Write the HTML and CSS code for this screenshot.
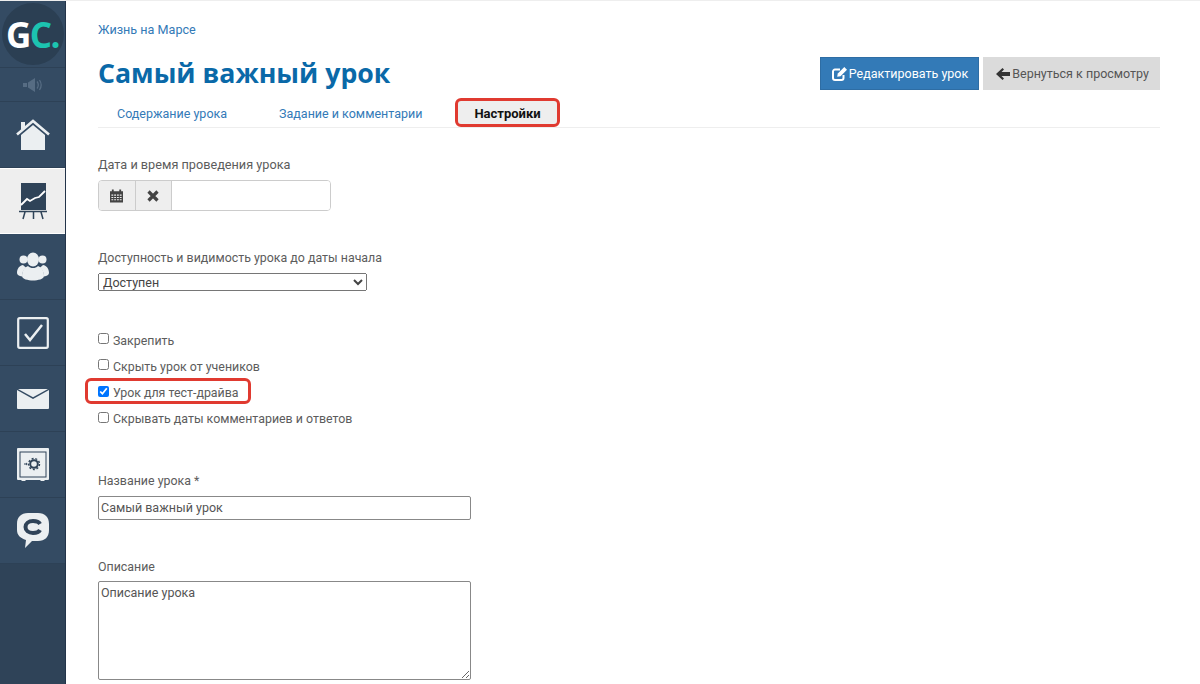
FILE: index.html
```html
<!DOCTYPE html>
<html lang="ru">
<head>
    <meta charset="UTF-8">
    <meta name="viewport" content="width=device-width, initial-scale=1.0">
    <title>Самый важный урок</title>
    <link rel="stylesheet" href="styles.css">
</head>
<body>
    <div class="page">
        <nav class="sidebar">
            <a class="side-logo">
                <span class="logo-circle"><span class="logo-g">G</span><span class="logo-c">C.</span></span>
            </a>
            <a class="side-sound">
                <svg width="22" height="16" viewBox="0 0 22 16"><path fill="#566c83" d="M1 6h4v4H1zM6 5.500 13 1v14L6 10.500z"/><path fill="none" stroke="#566c83" stroke-width="1.300" d="M15 4.500c1.500 2 1.500 5 0 7M17.500 3c2 3 2 7 0 10"/></svg>
            </a>
            <a class="side-item">
                <svg width="34" height="32" viewBox="0 0 34 32"><path fill="#ebeff1" d="M5 16 17 6l12 10v15H5z"/><path fill="none" stroke="#ebeff1" stroke-width="2.600" d="M1 15.500 17 2l16 13.500"/><path fill="#ebeff1" d="M5 3h4v5l-4 3z"/></svg>
            </a>
            <a class="side-item side-item-active">
                <svg width="28" height="38" viewBox="0 0 28 38"><path fill="#2f4358" d="M2 1h25v27H2z"/><path fill="none" stroke="#fff" stroke-width="1.800" d="M2 23l6-6 3 2 5-3 4-1 6-6"/><path fill="none" stroke="#2f4358" stroke-width="1.500" d="M0 29.500h28M6 30l-2 7M14.500 30v7M22 30l2 7"/></svg>
            </a>
            <a class="side-item">
                <svg width="34" height="29" viewBox="0 0 34 29"><path fill="#ebeff1" d="M7 13c-3 .5-6 3-6 8 0 2 2 3 5 3.500 0-4 1.500-7 4-9-1.200-.8-2.200-1.500-3-2.500zM27 13c3 .5 6 3 6 8 0 2-2 3-5 3.500 0-4-1.500-7-4-9 1.200-.8 2.200-1.500 3-2.500z"/><circle fill="#ebeff1" cx="7.500" cy="7.500" r="4"/><circle fill="#ebeff1" cx="26.500" cy="7.500" r="4"/><ellipse fill="#ebeff1" cx="17" cy="7.500" rx="6" ry="7"/><path fill="#ebeff1" d="M12 14c-4 1.500-6 5-6 10 0 3 6 4.500 11 4.500s11-1.500 11-4.500c0-5-2-8.500-6-10-1.500 1.500-3 2-5 2s-3.500-.5-5-2z"/></svg>
            </a>
            <a class="side-item">
                <svg width="32" height="32" viewBox="0 0 32 32"><rect x="1.200" y="1.200" width="29.600" height="29.600" rx="1.500" fill="none" stroke="#ebeff1" stroke-width="2.200"/><path fill="none" stroke="#ebeff1" stroke-width="2.500" d="M8 17l5 6L25 8"/></svg>
            </a>
            <a class="side-item">
                <svg width="32" height="20" viewBox="0 0 32 20"><path fill="#ebeff1" d="M0 1l16 9L32 1v18a1 1 0 0 1-1 1H1a1 1 0 0 1-1-1z"/><path fill="#ebeff1" d="M1 0h30l-15 8.300z"/></svg>
            </a>
            <a class="side-item">
                <svg width="32" height="33" viewBox="0 0 32 33"><path fill="#ebeff1" d="M1 0h30a1 1 0 0 1 1 1v30a1 1 0 0 1-1 1h-3l-1 1h-3l-1-1H9l-1 1H5l-1-1H1a1 1 0 0 1-1-1V1a1 1 0 0 1 1-1z"/><rect x="3" y="4" width="26" height="25" fill="none" stroke="#2f4358" stroke-width="1"/><circle cx="17" cy="16" r="3.800" fill="none" stroke="#2f4358" stroke-width="2"/><circle cx="17" cy="16" r="5.500" fill="none" stroke="#2f4358" stroke-width="1.400" stroke-dasharray="2 1.800"/><path stroke="#2f4358" stroke-width="1.200" d="M7 16h2"/><path fill="#2f4358" d="M9 14.500l1.500 1.500L9 17.500z"/></svg>
            </a>
            <a class="side-item">
                <svg width="32" height="36" viewBox="0 0 32 36"><path fill="#ebeff1" d="M11 0h10c7 0 11 4 11 11v6c0 7-4 11-11 11h-6l-7 7 1-8C3 25 0 22 0 17v-6C0 4 4 0 11 0z"/><path fill="none" stroke="#2f4358" stroke-width="4" d="M23 11c-1-2-3.500-3-7-3-4.500 0-7.500 2.500-7.500 6s3 6 7.500 6c3.500 0 6-1 7-3"/></svg>
            </a>
        </nav>

        <main class="content">
            <a class="crumb" href="#">Жизнь на Марсе</a>

            <div class="title-row">
                <h1>Самый важный урок</h1>
                <div class="title-buttons">
                    <a class="btn btn-primary">
                        <svg width="15" height="14" viewBox="0 0 15 14"><path fill="none" stroke="#fff" stroke-width="2" d="M8 2.500H3a2 2 0 0 0-2 2V11a2 2 0 0 0 2 2h6.500a2 2 0 0 0 2-2V8"/><path fill="#fff" d="M12.300 0 15 2.700 8.500 9.200l-3.300.6.600-3.300z"/></svg>
                        Редактировать урок
                    </a>
                    <a class="btn btn-grey">
                        <svg width="14" height="12" viewBox="0 0 14 12"><path fill="#333" d="M6.500 0 8 1.500 5.500 4H14v4H5.500L8 10.500 6.500 12 0 6z"/></svg>
                        Вернуться к просмотру
                    </a>
                </div>
            </div>

            <ul class="tabs">
                <li class="tab"><a href="#">Содержание урока</a></li>
                <li class="tab"><a href="#">Задание и комментарии</a></li>
                <li class="tab tab-active"><a href="#">Настройки</a></li>
            </ul>

            <form class="settings">
                <div class="field field-date">
                    <label class="field-label">Дата и время проведения урока</label>
                    <div class="date-group">
                        <button type="button" class="date-btn">
                            <svg width="13" height="14" viewBox="0 0 14 14"><path fill="#444" fill-rule="evenodd" d="M0 2h2V0h2v2h6V0h2v2h2v12H0zm1.500 3.500v1.200h2V5.500zm3 0v1.200h2V5.500zm3 0v1.200h2V5.500zm3 0v1.200h2V5.500zM1.500 8v1.200h2V8zm3 0v1.200h2V8zm3 0v1.200h2V8zm3 0v1.200h2V8zM1.500 10.500v1.200h2v-1.200zm3 0v1.200h2v-1.200zm3 0v1.200h2v-1.200zm3 0v1.200h2v-1.200z"/></svg>
                        </button>
                        <button type="button" class="date-btn">
                            <svg width="12" height="12" viewBox="0 0 12 12"><path fill="none" stroke="#444" stroke-width="3.200" d="M1.500 1.500l9 9M10.500 1.500l-9 9"/></svg>
                        </button>
                        <input type="text" class="date-input">
                    </div>
                </div>

                <div class="field field-access">
                    <label class="field-label">Доступность и видимость урока до даты начала</label>
                    <select class="access-select">
                        <option>Доступен</option>
                    </select>
                </div>

                <div class="checks">
                    <label class="check"><input type="checkbox"> Закрепить</label>
                    <label class="check"><input type="checkbox"> Скрыть урок от учеников</label>
                    <label class="check check-marked"><input type="checkbox" checked> Урок для тест-драйва</label>
                    <label class="check"><input type="checkbox"> Скрывать даты комментариев и ответов</label>
                </div>

                <div class="field field-name">
                    <label class="field-label">Название урока *</label>
                    <input type="text" class="wide-input" value="Самый важный урок">
                </div>

                <div class="field field-desc">
                    <label class="field-label">Описание</label>
                    <textarea class="wide-area">Описание урока</textarea>
                </div>
            </form>
        </main>
    </div>
</body>
</html>
```

FILE: styles.css
```css
/* General styling */
html, body {
    height: 100%;
    margin: 0;
    overflow: hidden;
}

body {
    font-family: Roboto, "Open Sans", sans-serif;
    font-size: 12.400px;
    color: #5c5c5c;
    background-color: #fff;
}

a {
    color: #337ab7;
    text-decoration: none;
}

.page {
    display: flex;
    height: 100%;
    border-top: 1px solid #eee;
    box-sizing: border-box;
}

/* Sidebar */
.sidebar {
    width: 65px;
    flex-shrink: 0;
    display: flex;
    flex-direction: column;
    background-color: #2f4358;
    border-right: 1px solid #23344a;
}

.side-logo {
    height: 66px;
    display: flex;
    align-items: center;
    justify-content: center;
    background-color: #344b63;
    border-bottom: 1px solid #2d4156;
}

.logo-circle {
    width: 62px;
    height: 62px;
    border-radius: 50%;
    background-color: #2b3f53;
    display: flex;
    align-items: center;
    justify-content: center;
    font-family: "Open Sans", sans-serif;
    font-weight: 700;
    font-size: 35px;
    letter-spacing: -1.500px;
}

.logo-g {
    color: #fff;
}

.logo-c {
    color: #1cc4b0;
}

.side-sound {
    height: 33px;
    display: flex;
    align-items: center;
    justify-content: center;
    background-color: #344b63;
    border-bottom: 1px solid #2d4156;
}

.side-item {
    height: 65px;
    display: flex;
    align-items: center;
    justify-content: center;
    background-color: #344b63;
    border-bottom: 1px solid #2d4156;
}

.side-item-active {
    background-color: #eee;
    border-top: 1px solid #fff;
    border-bottom: 1px solid #fff;
    height: 64px;
}

/* Main column */
.content {
    flex: 1;
    padding: 20px 40px 0 32px;
    min-width: 0;
}

.crumb {
    display: block;
    font-size: 12.600px;
    line-height: 18px;
}

.title-row {
    display: flex;
    justify-content: space-between;
    margin-top: 18px;
}

h1 {
    margin: 0;
    font-family: "Open Sans", sans-serif;
    font-size: 26.700px;
    line-height: 31px;
    font-weight: 700;
    color: #0a69a8;
}

.title-buttons {
    display: flex;
    gap: 4px;
}

.btn {
    display: flex;
    align-items: center;
    gap: 2px;
    height: 33px;
    font-size: 12.500px;
    box-sizing: border-box;
}

.btn-primary {
    padding: 0 10px 0 11px;
    background-color: #337ab7;
    border: 1px solid #2e6da4;
    color: #fff;
}

.btn-grey {
    padding: 0 11px 0 13px;
    background-color: #dbdbdb;
    color: #555;
}

/* Tabs */
.tabs {
    display: flex;
    list-style: none;
    margin: 8px 0 0 0;
    padding: 0;
    height: 29px;
    border-bottom: 1px solid #eee;
}

.tab {
    margin-right: 14px;
    padding: 0 19px;
    line-height: 31px;
    font-size: 12.500px;
}

.tab-active {
    padding: 0 16px;
    height: 29px;
    line-height: 25px;
    font-size: 13px;
    box-sizing: border-box;
    background-color: #eee;
    border: 3px solid #e03a30;
    border-radius: 6px;
}

.tab-active a {
    color: #111;
    font-weight: 700;
}

/* Form */
.field-label {
    display: block;
    line-height: 18px;
    margin-bottom: 6px;
}

.field-date {
    margin-top: 28px;
}

.field-date .field-label {
    font-size: 12.700px;
}

.date-group {
    display: flex;
    width: 233px;
    height: 31px;
    border: 1px solid #ccc;
    border-radius: 4px;
    box-sizing: border-box;
    overflow: hidden;
}

.date-btn {
    width: 36.500px;
    padding: 0;
    border: none;
    border-right: 1px solid #ccc;
    background-color: #eee;
    display: flex;
    align-items: center;
    justify-content: center;
}

.date-input {
    flex: 1;
    min-width: 0;
    border: none;
    outline: none;
}

.field-access {
    margin-top: 38px;
}

.access-select {
    display: block;
    width: 269px;
    height: 18px;
    font-family: inherit;
    font-size: 12.500px;
    color: #444;
    padding: 0;
}

.checks {
    margin-top: 40px;
    display: flex;
    flex-direction: column;
    gap: 8.300px;
}

.check {
    display: flex;
    align-items: center;
    gap: 4px;
    height: 18px;
}

.check input {
    margin: 0 0 3px 0;
    width: 11px;
    height: 11px;
}

.check-marked {
    position: relative;
}

/* red marker drawn over the row */
.check-marked::after {
    content: "";
    position: absolute;
    left: -13px;
    top: -6px;
    width: 166px;
    height: 26px;
    border: 3px solid #e03a30;
    border-radius: 6px;
    box-sizing: border-box;
}

.field-name {
    margin-top: 44px;
}

.wide-input,
.wide-area {
    display: block;
    width: 373px;
    box-sizing: border-box;
    font-family: inherit;
    font-size: 12.500px;
    color: #555;
    margin: 0;
    padding: 1px 2px;
    border: 1px solid #888;
    border-radius: 2px;
}

.wide-input {
    height: 24px;
}

.wide-area {
    height: 99px;
    padding-top: 3px;
}

.field-desc {
    margin-top: 38px;
}

.field-desc .field-label {
    margin-bottom: 5px;
}
```
